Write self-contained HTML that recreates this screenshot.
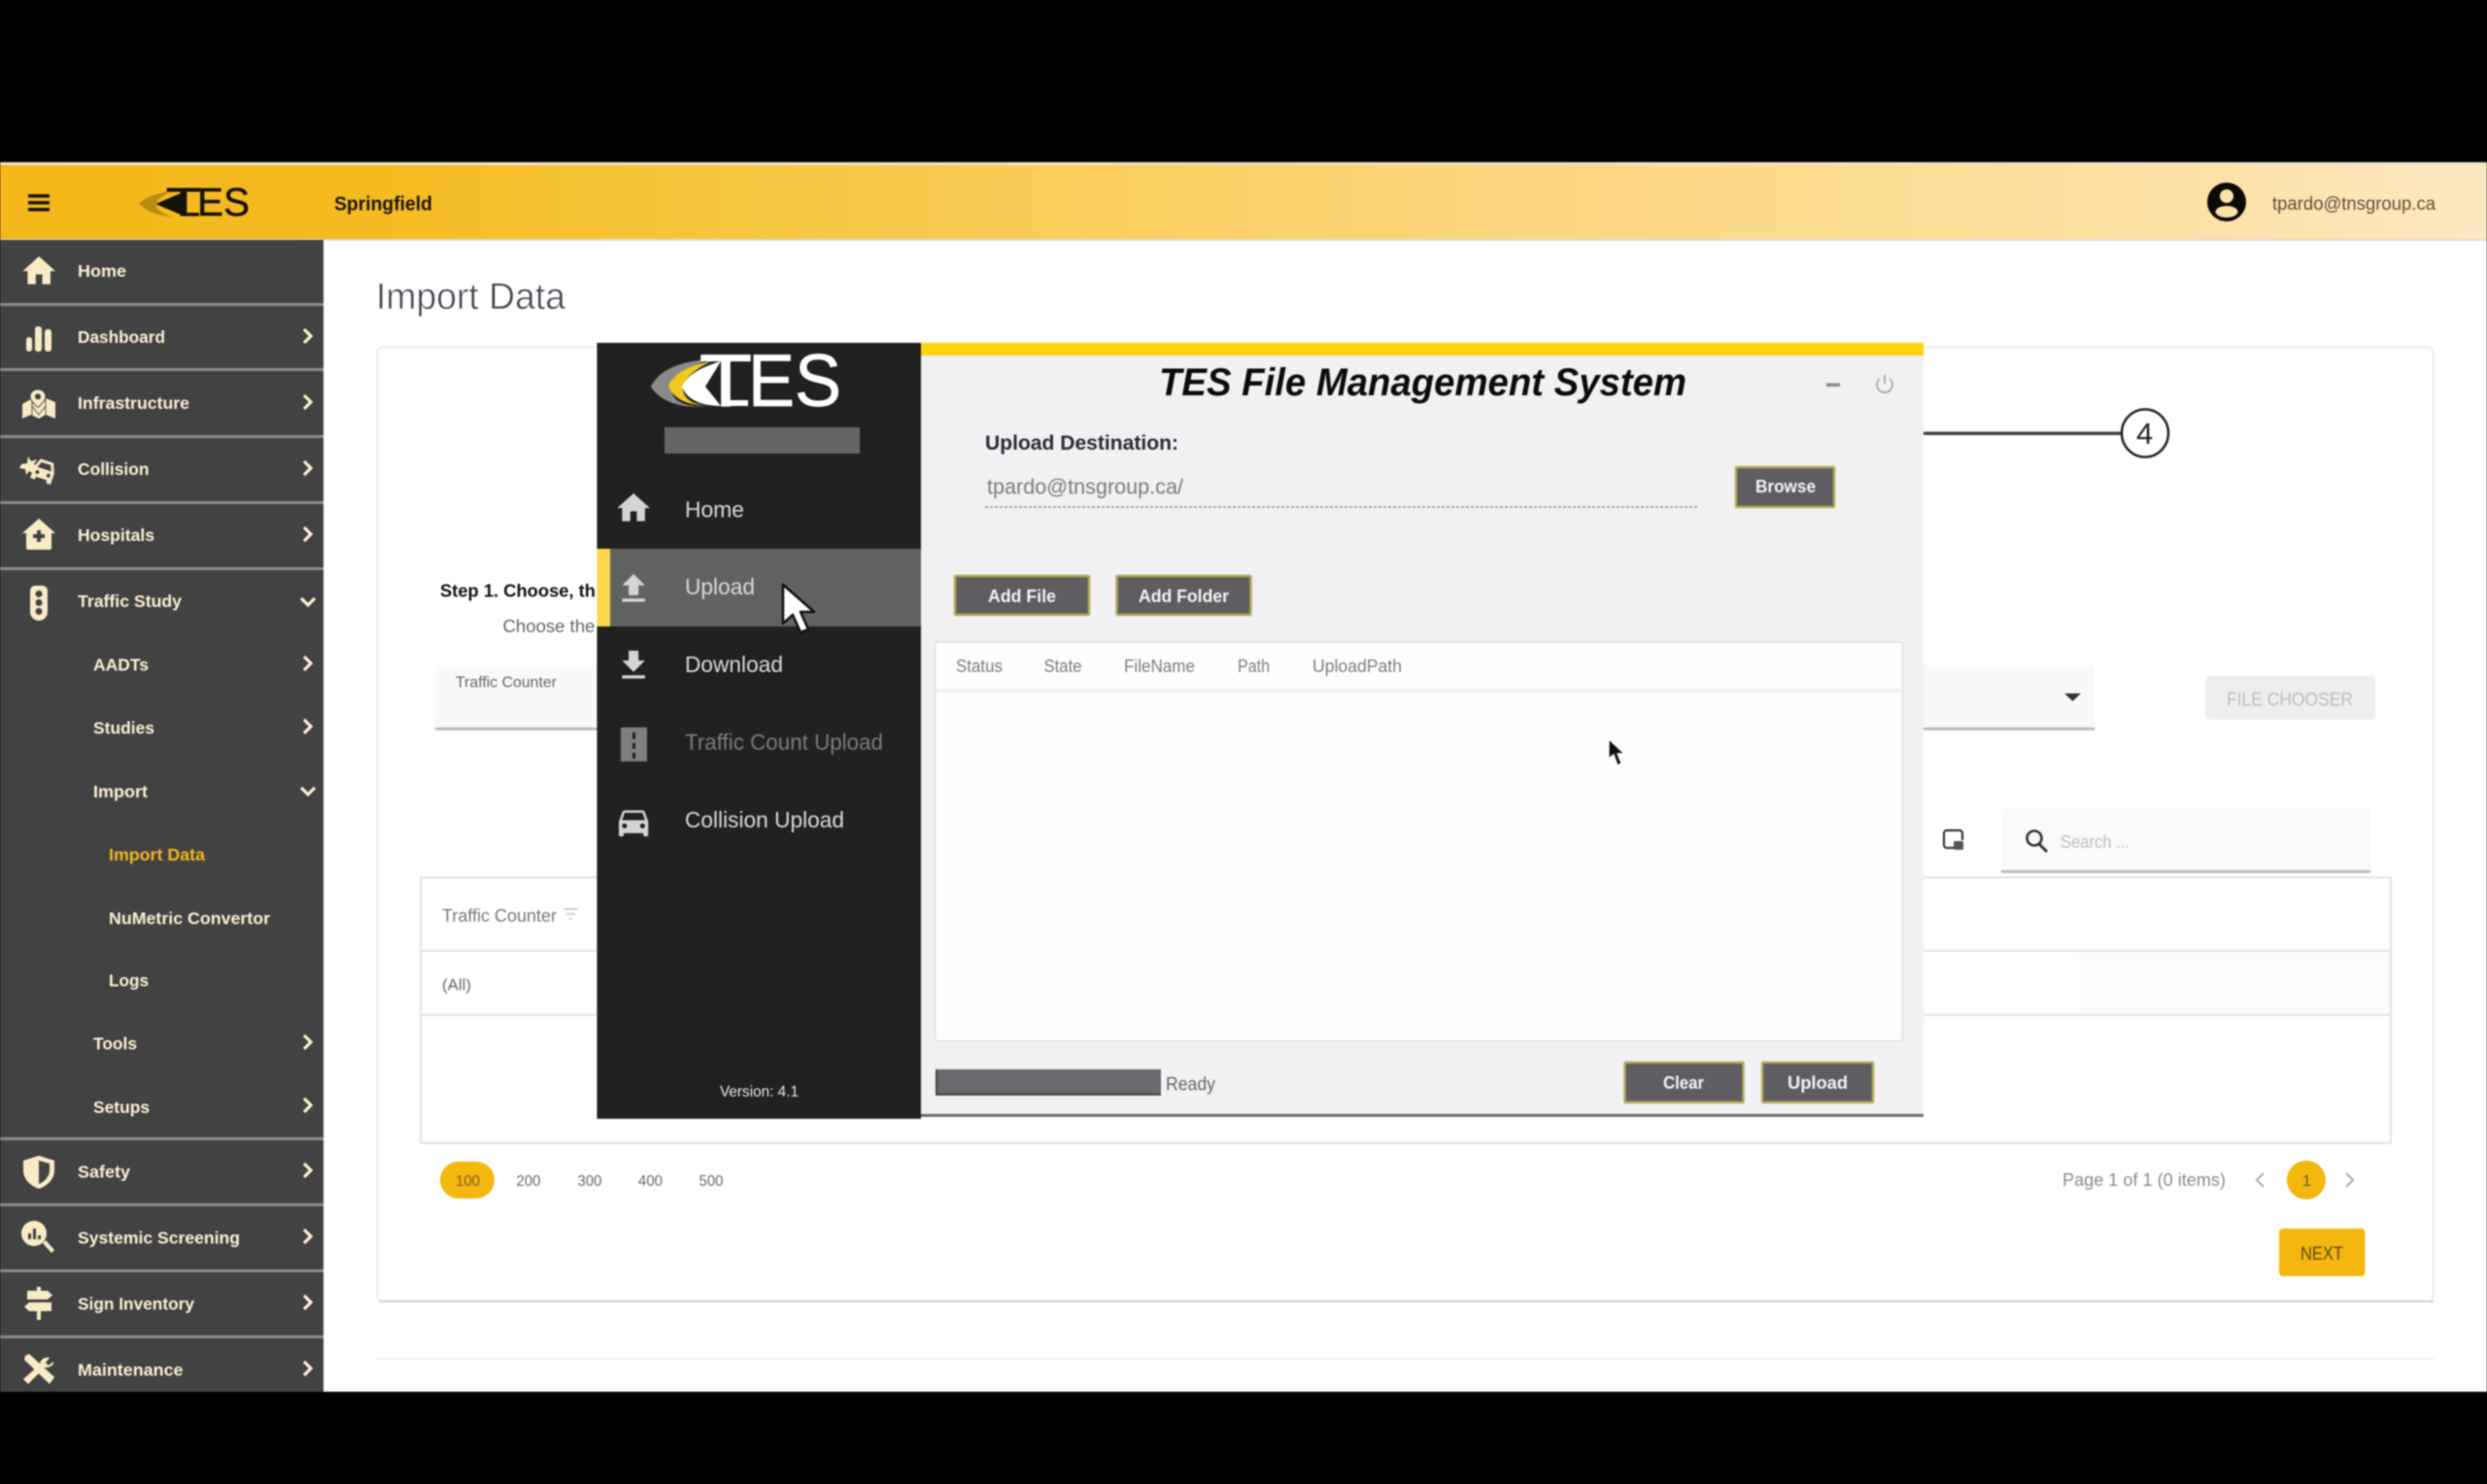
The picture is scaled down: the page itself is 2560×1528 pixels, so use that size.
<!DOCTYPE html>
<html lang="en"><head><meta charset="utf-8"><title>Import Data</title>
<style>
html,body{margin:0;padding:0;background:#000;width:2560px;height:1528px;overflow:hidden}
svg{display:block;filter:blur(.7px)}
text{font-family:"Liberation Sans",sans-serif}
.s{font-size:17.5px;font-weight:700;fill:#fdf0d2}
.m{font-size:23px;fill:#d9d9d9}
.b{font-size:18.5px;font-weight:700;fill:#f4f4f4}
.h{font-size:18px;fill:#7c7c7c}
.p{font-size:16px;fill:#666}
.ic{fill:#faebc8}
.ch{fill:none;stroke:#fdf0d2;stroke-width:3.2}
.dv{fill:#8c8c8c}
.mi{fill:#d4d4d4}
.bt{fill:#5f5d62;stroke:#b5aa52;stroke-width:2.5}
</style></head><body>
<svg xmlns="http://www.w3.org/2000/svg" width="2560" height="1528" viewBox="0 0 2560 1528">
<defs>
<linearGradient id="g" x1="0" x2="1" y1="0" y2="0"><stop offset="0" stop-color="#f4b71a"/><stop offset=".15" stop-color="#f4ba20"/><stop offset=".3" stop-color="#f6c640"/><stop offset=".6" stop-color="#fbd67d"/><stop offset=".88" stop-color="#fde0a5"/><stop offset="1" stop-color="#fde8c4"/></linearGradient>
</defs>
<rect width="2560" height="1528" fill="#000"/>
<rect y="168" width="2560" height="1265" fill="#fff"/>
<rect y="168" width="2560" height="79" fill="url(#g)"/>
<rect y="167" width="2560" height="3" fill="#efe3c6"/>
<rect y="246" width="2560" height="2" fill="#e8dcc0"/>

<!-- header -->
<rect x="29" y="200" width="22" height="3.500" fill="#1c1500"/><rect x="29" y="207" width="22" height="3.500" fill="#1c1500"/><rect x="29" y="214" width="22" height="3.500" fill="#1c1500"/>
<path d="M143 209C152 202 162 199 176 197C167 202 160 207 160 211C162 217 170 221 178 223C160 222 149 217 143 209Z" fill="#b88c12"/>
<path d="M160 210L186 199V221Z" fill="#15120a"/>
<text x="171" y="222" font-size="41" textLength="36" lengthAdjust="spacingAndGlyphs" fill="#15120a" stroke="#15120a" stroke-width=".9">T</text>
<rect x="192" y="219" width="13" height="3.500" fill="#15120a"/>
<text x="203" y="222" font-size="41" textLength="54" lengthAdjust="spacingAndGlyphs" fill="#15120a" stroke="#15120a" stroke-width=".4">ES</text>
<text x="344" y="216.500" font-size="20" font-weight="700" textLength="101" lengthAdjust="spacingAndGlyphs" fill="#1c1608">Springfield</text>
<circle cx="2292" cy="208" r="20" fill="#0c0a05"/><circle cx="2292" cy="202" r="7" fill="#fbe0a8"/><ellipse cx="2292" cy="218" rx="11.500" ry="6" fill="#fbe0a8"/>
<text x="2339" y="216" font-size="19" textLength="168" lengthAdjust="spacingAndGlyphs" fill="#5c5038">tpardo@tnsgroup.ca</text>

<!-- sidebar -->
<rect y="247" width="333" height="1186" fill="#424242"/>
<rect y="312" width="333" height="3" class="dv"/><rect y="379" width="333" height="3" class="dv"/><rect y="448" width="333" height="3" class="dv"/><rect y="516" width="333" height="3" class="dv"/><rect y="584" width="333" height="3" class="dv"/>
<rect y="1171" width="333" height="3" class="dv"/><rect y="1239" width="333" height="3" class="dv"/><rect y="1307" width="333" height="3" class="dv"/><rect y="1375" width="333" height="3" class="dv"/>

<text class="s" x="80" y="285" textLength="50" lengthAdjust="spacingAndGlyphs">Home</text>
<text class="s" x="80" y="353" textLength="90" lengthAdjust="spacingAndGlyphs">Dashboard</text>
<text class="s" x="80" y="421" textLength="115" lengthAdjust="spacingAndGlyphs">Infrastructure</text>
<text class="s" x="80" y="489" textLength="73.500" lengthAdjust="spacingAndGlyphs">Collision</text>
<text class="s" x="80" y="557" textLength="79" lengthAdjust="spacingAndGlyphs">Hospitals</text>
<text class="s" x="80" y="625" textLength="107" lengthAdjust="spacingAndGlyphs">Traffic Study</text>
<text class="s" x="96" y="690.500" textLength="57" lengthAdjust="spacingAndGlyphs">AADTs</text>
<text class="s" x="96" y="755.500" textLength="63" lengthAdjust="spacingAndGlyphs">Studies</text>
<text class="s" x="96" y="821" textLength="56" lengthAdjust="spacingAndGlyphs">Import</text>
<text class="s" x="112" y="886" textLength="99" lengthAdjust="spacingAndGlyphs" style="fill:#f3b61f">Import Data</text>
<text class="s" x="112" y="951.500" textLength="166" lengthAdjust="spacingAndGlyphs">NuMetric Convertor</text>
<text class="s" x="112" y="1015.500" textLength="41" lengthAdjust="spacingAndGlyphs">Logs</text>
<text class="s" x="96" y="1080.500" textLength="45" lengthAdjust="spacingAndGlyphs">Tools</text>
<text class="s" x="96" y="1146" textLength="58" lengthAdjust="spacingAndGlyphs">Setups</text>
<text class="s" x="80" y="1212.500" textLength="54" lengthAdjust="spacingAndGlyphs">Safety</text>
<text class="s" x="80" y="1280.500" textLength="167" lengthAdjust="spacingAndGlyphs">Systemic Screening</text>
<text class="s" x="80" y="1348.500" textLength="120" lengthAdjust="spacingAndGlyphs">Sign Inventory</text>
<text class="s" x="80" y="1416.500" textLength="108.500" lengthAdjust="spacingAndGlyphs">Maintenance</text>

<g class="ch">
<path d="M313 339l7 7-7 7"/><path d="M313 407l7 7-7 7"/><path d="M313 475l7 7-7 7"/><path d="M313 543l7 7-7 7"/>
<path d="M310 616l7 7 7-7"/>
<path d="M313 676l7 7-7 7"/><path d="M313 741l7 7-7 7"/>
<path d="M310 811l7 7 7-7"/>
<path d="M313 1066l7 7-7 7"/><path d="M313 1131l7 7-7 7"/>
<path d="M313 1198l7 7-7 7"/><path d="M313 1266l7 7-7 7"/><path d="M313 1334l7 7-7 7"/><path d="M313 1402l7 7-7 7"/>
</g>

<!-- sidebar icons -->
<g class="ic">
<path transform="translate(20 259) scale(1.68)" d="M10 20v-6h4v6h5v-8h3L12 3 2 12h3v8z"/>
<rect x="27" y="347" width="6" height="15" rx="3"/><rect x="36" y="336" width="7" height="26" rx="3"/><rect x="46" y="339" width="7" height="23" rx="3"/>
<!-- infrastructure: map + pin -->
<path d="M23 416L32 411L39 420L47 410L57 414V431L47 427L40 431L32 427L23 431Z"/>
<path d="M33 412V427M47 411V427M33 418L40 427L47 418" fill="none" stroke="#5a5648" stroke-width="1"/>
<path fill-rule="evenodd" d="M39 401c-5 0-8 3.500-8 7.500 0 4.500 8 11 8 11s8-6.500 8-11c0-4-3-7.500-8-7.500zm0 10a2.600 2.600 0 110-5.200 2.600 2.600 0 010 5.200z" stroke="#424242" stroke-width="1"/>
<!-- collision -->
<path d="M22 478l6-1 1-7 3 5 6-2-3 5 4 3-5 1 1 6-5-3-3 4-1-6-6-1z"/>
<path fill-rule="evenodd" transform="rotate(18 45 485)" d="M38 474h14l4 10v12h-5v-3H39v3h-5v-12zm2 3l-2.500 6h15l-2.500-6zm-1 9a2 2 0 100 4 2 2 0 000-4zm12 0a2 2 0 100 4 2 2 0 000-4z"/>
<path fill-rule="evenodd" d="M40 534l17 15h-4v15a2 2 0 01-2 2H29a2 2 0 01-2-2v-15h-4zm-2 12v4h-4v4h4v4h4v-4h4v-4h-4v-4z"/>
<path fill-rule="evenodd" d="M36 603h8a5 5 0 015 5v22a9 9 0 01-18 0v-22a5 5 0 015-5zm4 5a3.500 3.500 0 100 7 3.500 3.500 0 000-7zm0 9a3.500 3.500 0 100 7 3.500 3.500 0 000-7zm0 9a3.500 3.500 0 100 7 3.500 3.500 0 000-7z"/>
<path fill-rule="evenodd" d="M40 1190l16 5v10c0 9-7 16-16 19-9-3-16-10-16-19v-10zm0 5v24c6-2 11-8 11-14v-7z"/>
<!-- systemic -->
<path fill-rule="evenodd" d="M35 1257a13 13 0 110 26 13 13 0 010-26zm-6 13v6h3v-6zm5-5v11h3v-11zm5 7v4h3v-4z"/>
<path d="M44 1280l3-3 9 10-3 3z"/>
<!-- sign -->
<path d="M28 1329H49L54 1333.500L49 1338H28Z"/>
<path d="M30 1341H53V1350H30L25 1345.500Z"/>
<rect x="38" y="1325" width="4" height="4"/><rect x="38" y="1350" width="4" height="9"/>
<!-- maintenance -->
<path d="M26 1396l4-2 26 24-5 7-26-25z"/>
<path d="M55 1402l-5 4-3-3 4-5c-5-1-10 2-10 7l-17 15 5 5 17-17c5 1 10-3 9-6z"/>
</g>

<!-- page -->
<text x="387" y="318" font-size="38" textLength="195" lengthAdjust="spacingAndGlyphs" fill="#3f444e" stroke="#fff" stroke-width=".7">Import Data</text>
<rect x="388.500" y="357.500" width="2116" height="982" rx="5" fill="#fff" stroke="#ececec" stroke-width="2"/>
<rect x="390" y="1339" width="2115" height="2" fill="#d2d2d2"/>
<rect x="388" y="1398" width="2117" height="2" fill="#efefef"/>
<text x="453" y="614.500" font-size="18" font-weight="700" textLength="160" lengthAdjust="spacingAndGlyphs" fill="#111">Step 1. Choose, th</text>
<text x="517.500" y="651" font-size="18" textLength="95" lengthAdjust="spacingAndGlyphs" fill="#666">Choose the</text>
<rect x="448" y="685" width="1708" height="65" fill="#f9f8fb"/>
<rect x="448" y="749" width="1708" height="3" fill="#bcbcbc"/>
<text x="469" y="707.500" font-size="16" textLength="104" lengthAdjust="spacingAndGlyphs" fill="#666">Traffic Counter</text>
<path d="M2125 714h17l-8.500 8z" fill="#333"/>
<rect x="2270" y="696" width="175" height="45" rx="4" fill="#efedf0"/>
<text x="2292" y="726.500" font-size="19" textLength="130" lengthAdjust="spacingAndGlyphs" fill="#bcbcbc">FILE CHOOSER</text>

<!-- export icon -->
<path d="M2017 873h-13a3 3 0 01-3-3v-12a3 3 0 013-3h13a3 3 0 013 3v7" fill="none" stroke="#333" stroke-width="2.200"/>
<rect x="2011" y="866" width="10" height="9" rx="1.500" fill="#555"/>
<!-- search -->
<rect x="2060" y="833" width="380" height="64" fill="#faf9fb"/>
<rect x="2060" y="896" width="380" height="3" fill="#b9b9b9"/>
<circle cx="2094" cy="863" r="7.500" fill="none" stroke="#333" stroke-width="2.600"/><path d="M2099 869l8 8" stroke="#333" stroke-width="3"/>
<text x="2121" y="873" font-size="18" textLength="71" lengthAdjust="spacingAndGlyphs" fill="#bdbdbd">Search ...</text>

<!-- grid -->
<rect x="433" y="903.500" width="2028" height="273.500" fill="#fff" stroke="#e2e2e2" stroke-width="2"/>
<rect x="2140" y="980" width="320" height="64" fill="#fcfbfd"/>
<rect x="433" y="978" width="2028" height="2" fill="#e2e2e2"/>
<rect x="433" y="1044" width="2028" height="2" fill="#e2e2e2"/>
<text x="455" y="949" font-size="18" textLength="118" lengthAdjust="spacingAndGlyphs" fill="#777">Traffic Counter</text>
<path d="M580 936h15M583 941h9M586 946h3" stroke="#bbb" stroke-width="1.500" fill="none"/>
<text x="455" y="1019.500" font-size="17" textLength="30" lengthAdjust="spacingAndGlyphs" fill="#666">(All)</text>

<!-- pager -->
<rect x="453" y="1196" width="56" height="38" rx="19" fill="#f4b70f"/>
<text class="p" x="469" y="1221" textLength="25" lengthAdjust="spacingAndGlyphs" style="fill:#7a6020">100</text>
<text class="p" x="531.500" y="1221" textLength="25" lengthAdjust="spacingAndGlyphs">200</text>
<text class="p" x="594.500" y="1221" textLength="25" lengthAdjust="spacingAndGlyphs">300</text>
<text class="p" x="657" y="1221" textLength="25" lengthAdjust="spacingAndGlyphs">400</text>
<text class="p" x="719.500" y="1221" textLength="25" lengthAdjust="spacingAndGlyphs">500</text>
<text x="2123" y="1221" font-size="18" textLength="168" lengthAdjust="spacingAndGlyphs" fill="#888">Page 1 of 1 (0 items)</text>
<path d="M2330 1208l-7 7 7 7" fill="none" stroke="#aaa" stroke-width="2"/>
<circle cx="2374" cy="1215" r="20" fill="#f4b70f"/>
<text x="2370" y="1221" font-size="16" fill="#6a5210">1</text>
<path d="M2415 1208l7 7-7 7" fill="none" stroke="#aaa" stroke-width="2"/>
<rect x="2346" y="1265" width="88.500" height="49" rx="4" fill="#f4b70f"/>
<text x="2368" y="1297" font-size="19" textLength="44" lengthAdjust="spacingAndGlyphs" fill="#5a4a10">NEXT</text>

<!-- callout -->
<rect x="1979" y="444.500" width="205" height="3.500" fill="#444"/>
<ellipse cx="2208" cy="446" rx="24" ry="24.500" fill="#fff" stroke="#222" stroke-width="2.500"/>
<text x="2199" y="457" font-size="31" fill="#222">4</text>

<!-- modal -->
<rect x="948" y="353" width="1032" height="796" fill="#f1f0f3"/>
<rect x="948" y="353" width="1032" height="13" fill="#fdd40d"/>
<rect x="948" y="1147" width="1032" height="3" fill="#6c6c6c"/>
<rect x="614.500" y="353" width="333.500" height="799" fill="#212121"/>

<path d="M670 398C680 378 705 372 730 370C705 380 690 392 692 405C695 415 710 420 730 418C700 422 678 412 670 398Z" fill="#8a8a8a"/>
<path d="M688 397C695 382 715 375 732 372C712 382 702 392 703 402C705 412 715 417 728 417C708 418 692 410 688 397Z" fill="#f0c81e"/>
<path d="M702 398C708 385 722 378 742 372L726 398L742 418C720 418 706 410 702 398Z" fill="#fff"/>
<text x="720" y="418" font-size="76" textLength="54" lengthAdjust="spacingAndGlyphs" fill="#fff" stroke="#fff" stroke-width="1.200">T</text>
<rect x="748" y="412" width="22" height="6" fill="#fff"/>
<text x="770" y="418" font-size="76" textLength="96" lengthAdjust="spacingAndGlyphs" fill="#fff" stroke="#fff" stroke-width=".8">ES</text>
<rect x="684" y="440" width="201" height="27" fill="#656565"/>

<rect x="614.500" y="565" width="333.500" height="80" fill="#626262"/>
<rect x="614.500" y="565" width="13.500" height="80" fill="#fdd84d"/>
<path class="mi" transform="translate(632 503) scale(1.68)" d="M10 20v-6h4v6h5v-8h3L12 3 2 12h3v8z"/>
<path class="mi" transform="translate(632 586) scale(1.68)" d="M9 16h6v-6h4l-7-7-7 7h4zm-4 2h14v2H5z"/>
<path class="mi" transform="translate(632 665) scale(1.68)" d="M19 9h-4V3H9v6H5l7 7 7-7zM5 18v2h14v-2H5z"/>
<path fill="#7f7f7f" fill-rule="evenodd" d="M639 749h27v35h-27zm12 5v7h3v-7zm0 11v6h3v-6zm0 10v6h3v-6z"/>
<path class="mi" transform="translate(632 826) scale(1.68)" d="M18.920 6.010C18.720 5.420 18.160 5 17.500 5h-11c-.66 0-1.210.42-1.420 1.010L3 12v8c0 .55.45 1 1 1h1c.55 0 1-.45 1-1v-1h12v1c0 .55.45 1 1 1h1c.55 0 1-.45 1-1v-8l-2.080-5.990zM6.500 16c-.83 0-1.500-.67-1.500-1.500S5.670 13 6.500 13s1.500.67 1.500 1.500S7.330 16 6.500 16zm11 0c-.83 0-1.500-.67-1.500-1.500s.67-1.500 1.500-1.500 1.500.67 1.500 1.500-.67 1.500-1.500 1.500zM5 11l1.500-4.500h11L19 11H5z"/>
<text class="m" x="705" y="532.500" textLength="61" lengthAdjust="spacingAndGlyphs">Home</text>
<text class="m" x="705" y="612" textLength="72" lengthAdjust="spacingAndGlyphs">Upload</text>
<text class="m" x="705" y="692" textLength="101" lengthAdjust="spacingAndGlyphs">Download</text>
<text class="m" x="705" y="772" textLength="204" lengthAdjust="spacingAndGlyphs" style="fill:#7c7c7c">Traffic Count Upload</text>
<text class="m" x="705" y="852" textLength="164" lengthAdjust="spacingAndGlyphs">Collision Upload</text>
<text x="741" y="1129" font-size="16" textLength="81" lengthAdjust="spacingAndGlyphs" fill="#e8e8e8">Version: 4.1</text>
<path d="M806 602L806 642L816 633L824 651L832 648L824 630L838 630Z" fill="#fff" stroke="#111" stroke-width="2.500" stroke-linejoin="round"/>

<text x="1193" y="407" font-size="40" font-weight="700" font-style="italic" textLength="543" lengthAdjust="spacingAndGlyphs" fill="#0c0c0c">TES File Management System</text>
<rect x="1880" y="394.500" width="14" height="3.500" fill="#8a8a8a"/>
<path d="M1934.800 390a8 8 0 1010.400 0M1940 386v9" fill="none" stroke="#a8a8a8" stroke-width="1.800"/>

<text x="1014" y="463" font-size="21" font-weight="700" textLength="199" lengthAdjust="spacingAndGlyphs" fill="#2a2a33">Upload Destination:</text>
<text x="1016" y="508.500" font-size="22" textLength="202" lengthAdjust="spacingAndGlyphs" fill="#7c7c7c">tpardo@tnsgroup.ca/</text>
<path d="M1014 522H1748" stroke="#aaa" stroke-width="2" stroke-dasharray="3 2"/>

<rect class="bt" x="1787" y="481" width="101" height="41" rx="1"/>
<text class="b" x="1807" y="507" textLength="62" lengthAdjust="spacingAndGlyphs">Browse</text>
<rect class="bt" x="983" y="593" width="138" height="40" rx="1"/>
<text class="b" x="1017" y="620" textLength="70" lengthAdjust="spacingAndGlyphs">Add File</text>
<rect class="bt" x="1149.500" y="593" width="138" height="40" rx="1"/>
<text class="b" x="1172" y="620" textLength="93" lengthAdjust="spacingAndGlyphs">Add Folder</text>

<rect x="962.500" y="661" width="996" height="411" rx="3" fill="#fefdfe" stroke="#e4e4e6" stroke-width="2"/>
<rect x="963" y="710" width="995" height="2" fill="#ebebee"/>
<text class="h" x="984" y="692" textLength="48" lengthAdjust="spacingAndGlyphs">Status</text>
<text class="h" x="1074.500" y="692" textLength="39" lengthAdjust="spacingAndGlyphs">State</text>
<text class="h" x="1157" y="692" textLength="73" lengthAdjust="spacingAndGlyphs">FileName</text>
<text class="h" x="1274" y="692" textLength="33" lengthAdjust="spacingAndGlyphs">Path</text>
<text class="h" x="1351" y="692" textLength="92" lengthAdjust="spacingAndGlyphs">UploadPath</text>
<path d="M1656 761V781L1661 777L1665 788L1669 786L1665 776L1672 776Z" fill="#111" stroke="#fff" stroke-width="1.200"/>

<rect x="963" y="1101" width="232" height="27" fill="#6a686c"/>
<path d="M964 1101V1127H1195" fill="none" stroke="#444" stroke-width="2"/>
<text x="1200" y="1122.500" font-size="19" textLength="51" lengthAdjust="spacingAndGlyphs" fill="#666">Ready</text>
<rect class="bt" x="1672.500" y="1094" width="122" height="41" rx="1"/>
<text class="b" x="1712" y="1121" textLength="42" lengthAdjust="spacingAndGlyphs">Clear</text>
<rect class="bt" x="1814" y="1094" width="114" height="41" rx="1"/>
<text class="b" x="1840" y="1121" textLength="62" lengthAdjust="spacingAndGlyphs">Upload</text>
</svg>
</body></html>
